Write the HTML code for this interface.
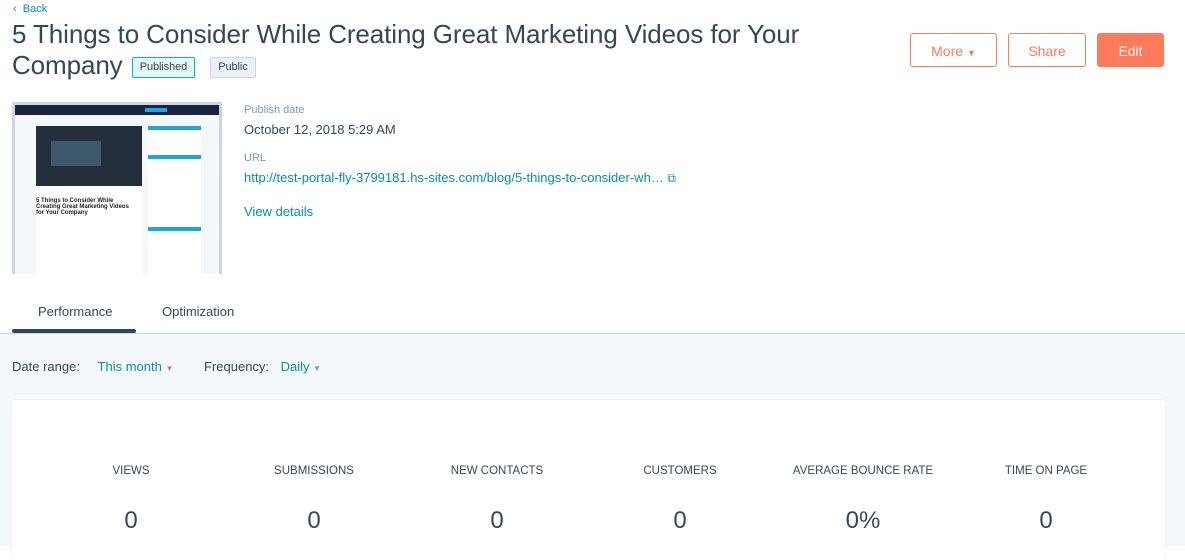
<!DOCTYPE html><html><head><style>
body{margin:0;width:1185px;height:545px;overflow:hidden;font-family:"Liberation Sans",sans-serif;color:#33475b;background:#fff;position:relative}
.a{position:absolute}
.btn{position:absolute;top:33px;height:34px;border:1px solid #ff7a59;border-radius:3px;color:#ff7a59;font-size:14px;text-align:center;line-height:34px;box-sizing:border-box;background:#fff}
.m{font-size:11.5px;color:#33475b;text-align:center;width:180px}
.n{font-size:24px;color:#33475b;text-align:center;width:180px}
</style></head><body>
<div class="a" style="left:13px;top:3px;font-size:11px;color:#0091ae">‹&nbsp; Back</div>
<div class="a" style="left:12px;top:19px;font-size:26px;line-height:31px;width:820px;color:#33475b;letter-spacing:-0.1px">5 Things to Consider While Creating Great Marketing Videos for Your Company <span style="display:inline-block;vertical-align:4px;font-size:11px;line-height:19px;padding:0 7px;border:1px solid #00bda5;background:#e5f8f6;border-radius:2px;margin-left:2px">Published</span> <span style="display:inline-block;vertical-align:4px;font-size:11px;line-height:19px;padding:0 7px;border:1px solid #cbd6e2;background:#eaf0f6;border-radius:2px;margin-left:8px">Public</span></div>
<div class="btn" style="left:910px;width:87px">More <span style="font-size:9px">▼</span></div>
<div class="btn" style="left:1008px;width:78px">Share</div>
<div class="btn" style="left:1097px;width:67px;background:#ff7a59;color:#fff">Edit</div>
<div class="a" style="left:12px;top:102px;width:210px;height:172px;background:#cbd6e2">
 <div class="a" style="left:3px;top:3px;width:204px;height:169px;background:#f5f8fa">
  <div class="a" style="left:0;top:0;width:204px;height:10px;background:#1c2340"><div class="a" style="left:130px;top:3px;width:22px;height:4px;background:#1aa6e6"></div></div>
  <div class="a" style="left:21px;top:21px;width:106px;height:60px;background:#23303c"><div class="a" style="left:15px;top:15px;width:50px;height:25px;background:#4a6a80;opacity:.7"></div></div>
  <div class="a" style="left:21px;top:81px;width:106px;height:90px;background:#fff"><div class="a" style="left:0;top:12px;font-size:6px;font-weight:bold;line-height:6px;color:#222;width:100px">5 Things to Consider While Creating Great Marketing Videos for Your Company</div></div>
  <div class="a" style="left:133px;top:21px;width:53px;height:148px;background:#fff"><div style="height:4px;background:#1aa6e6;margin-top:0"></div><div style="height:4px;background:#1aa6e6;margin-top:25px"></div><div style="height:4px;background:#1aa6e6;margin-top:68px"></div></div>
 </div>
</div>
<div class="a" style="left:244px;top:104px;font-size:11px;color:#7c98b6">Publish date</div>
<div class="a" style="left:244px;top:122px;font-size:13px">October 12, 2018 5:29 AM</div>
<div class="a" style="left:244px;top:152px;font-size:11px;color:#7c98b6">URL</div>
<div class="a" style="left:244px;top:170px;font-size:13px;color:#0091ae">http://test-portal-fly-3799181.hs-sites.com/blog/5-things-to-consider-wh… <span style="font-size:12px">⧉</span></div>
<div class="a" style="left:244px;top:204px;font-size:13px;color:#0091ae">View details</div>
<div class="a" style="left:38px;top:304px;font-size:13px">Performance</div>
<div class="a" style="left:162px;top:304px;font-size:13px">Optimization</div>
<div class="a" style="left:0;top:333px;width:1185px;height:212px;background:#f5f8fa;border-top:1px solid #cbd6e2"></div>
<div class="a" style="left:12px;top:329px;width:124px;height:4px;background:#33475b;border-radius:2px"></div>
<div class="a" style="left:12px;top:359px;font-size:13px">Date range: <span style="color:#0091ae;margin-left:14px">This month <span style="font-size:8px;color:#7c98b6">▼</span></span></div>
<div class="a" style="left:204px;top:359px;font-size:13px">Frequency: <span style="color:#0091ae;margin-left:8px">Daily <span style="font-size:8px;color:#7c98b6">▼</span></span></div>
<div class="a" style="left:12px;top:400px;width:1153px;height:160px;background:#fff;border-radius:3px;box-shadow:0 0 2px rgba(0,0,0,.08)"></div>
<div class="a m" style="left:41px;top:465px">VIEWS</div><div class="a n" style="left:41px;top:507px">0</div>
<div class="a m" style="left:224px;top:465px">SUBMISSIONS</div><div class="a n" style="left:224px;top:507px">0</div>
<div class="a m" style="left:407px;top:465px">NEW CONTACTS</div><div class="a n" style="left:407px;top:507px">0</div>
<div class="a m" style="left:590px;top:465px">CUSTOMERS</div><div class="a n" style="left:590px;top:507px">0</div>
<div class="a m" style="left:773px;top:465px">AVERAGE BOUNCE RATE</div><div class="a n" style="left:773px;top:507px">0%</div>
<div class="a m" style="left:956px;top:465px">TIME ON PAGE</div><div class="a n" style="left:956px;top:507px">0</div>
</body></html>
